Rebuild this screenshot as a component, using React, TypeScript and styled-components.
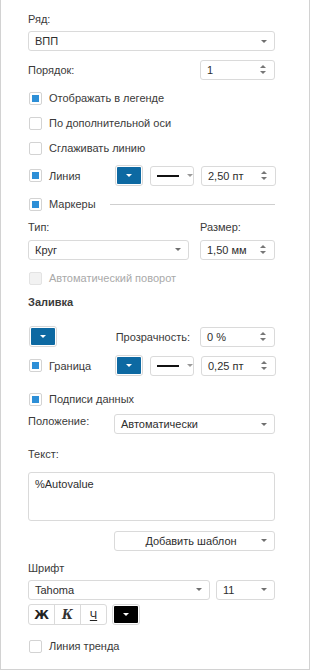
import styled, { createGlobalStyle } from "styled-components";

const Global = createGlobalStyle`
    body {
        margin: 0;
        background: #fff;
        font-family: "Liberation Sans", Arial, sans-serif;
        font-size: 11px;
        color: #3a3a3a;
    }
`;

const Panel = styled.div`
    width: 310px;
    height: 670px;
    box-sizing: border-box;
    border: 1px solid #d2d2d2;
    border-top: none;
    padding: 12px 34px 0 27px;
    display: flex;
    flex-direction: column;
`;

const Row = styled.div<{ $mt?: number; $h?: number; $top?: boolean }>`
    display: flex;
    align-items: ${({ $top }) => ($top ? "flex-start" : "center")};
    margin-top: ${({ $mt }) => $mt ?? 0}px;
    height: ${({ $h }) => $h ?? 14}px;
`;

const Text = styled.span<{ $muted?: boolean; $bold?: boolean; $w?: number }>`
    line-height: 14px;
    white-space: nowrap;
    color: ${({ $muted }) => ($muted ? "#a9a9a9" : "#3a3a3a")};
    font-weight: ${({ $bold }) => ($bold ? 700 : 400)};
    ${({ $w }) => ($w ? `width: ${$w}px; flex-shrink: 0;` : "")}
`;

const Spacer = styled.div`
    flex: 1;
`;

const Field = styled.div<{ $w?: number; $ml?: number }>`
    box-sizing: border-box;
    height: 20px;
    width: ${({ $w }) => ($w ? `${$w}px` : "auto")};
    ${({ $w }) => ($w ? "flex-shrink: 0;" : "flex: 1;")}
    margin-left: ${({ $ml }) => $ml ?? 0}px;
    border: 1px solid #dadada;
    border-radius: 3px;
    background: #fff;
    display: flex;
    align-items: center;
    padding: 0 7px 0 6px;
`;

const FieldText = styled.span<{ $center?: boolean }>`
    flex: 1;
    white-space: nowrap;
    color: #2e2e2e;
    text-align: ${({ $center }) => ($center ? "center" : "left")};
`;

const Caret = styled.span<{ $color?: string }>`
    width: 0;
    height: 0;
    border-left: 3px solid transparent;
    border-right: 3px solid transparent;
    border-top: 3px solid ${({ $color }) => $color ?? "#6f6f6f"};
    flex-shrink: 0;
`;

const SpinArrows = styled.span`
    display: flex;
    flex-direction: column;
    gap: 3px;
    flex-shrink: 0;
    margin-right: 1px;

    &::before,
    &::after {
        content: "";
        width: 0;
        height: 0;
        border-left: 3px solid transparent;
        border-right: 3px solid transparent;
    }
    &::before {
        border-bottom: 3px solid #777;
    }
    &::after {
        border-top: 3px solid #777;
    }
`;

const Box = styled.span<{ $checked?: boolean; $disabled?: boolean }>`
    box-sizing: border-box;
    width: 13px;
    height: 13px;
    border: 1px solid ${({ $disabled }) => ($disabled ? "#e3e3e3" : "#d3d3d3")};
    border-radius: 2px;
    background: ${({ $disabled }) => ($disabled ? "#f2f2f2" : "#fff")};
    margin: 0 7px 0 1px;
    flex-shrink: 0;
    display: flex;
    align-items: center;
    justify-content: center;

    &::after {
        content: "";
        width: 7px;
        height: 7px;
        background: #2d8fd7;
        display: ${({ $checked }) => ($checked ? "block" : "none")};
    }
`;

const ColorBtn = styled.div<{ $ml?: number }>`
    box-sizing: border-box;
    width: 28px;
    height: 21px;
    margin-left: ${({ $ml }) => $ml ?? 0}px;
    border: 1px solid #d8d8d8;
    border-radius: 3px;
    flex-shrink: 0;
    display: flex;
    align-items: center;
    justify-content: center;
    position: relative;
`;

const Swatch = styled.span<{ $color: string }>`
    position: absolute;
    inset: 1px;
    background: ${({ $color }) => $color};
    border-radius: 1px;
`;

const SwatchCaret = styled(Caret)`
    position: relative;
`;

const LineSample = styled.span`
    width: 22px;
    height: 2px;
    background: #111;
    margin-right: 8px;
    flex-shrink: 0;
`;

const Separator = styled.div`
    flex: 1;
    height: 1px;
    background: #cfcfcf;
    margin-left: 14px;
`;

const TextArea = styled.div`
    box-sizing: border-box;
    height: 49px;
    margin-top: 11px;
    border: 1px solid #dadada;
    border-radius: 3px;
    padding: 4px 6px;
    line-height: 14px;
    color: #2e2e2e;
`;

const StyleGroup = styled.div`
    display: flex;
    box-sizing: border-box;
    border: 1px solid #dadada;
    border-radius: 3px;
    height: 21px;
`;

const StyleBtn = styled.div<{ $last?: boolean }>`
    width: 25px;
    display: flex;
    align-items: center;
    justify-content: center;
    border-right: ${({ $last }) => ($last ? "none" : "1px solid #dadada")};
    color: #222;
`;

const Bold = styled.span`
    font-family: "DejaVu Sans", sans-serif;
    font-weight: 700;
    font-size: 12px;
`;

const Italic = styled.span`
    font-family: "DejaVu Serif", "Liberation Serif", serif;
    font-style: italic;
    font-weight: 700;
    font-size: 12px;
    color: #333;
`;

const Under = styled.span`
    text-decoration: underline;
    font-size: 11px;
`;

function Check({ label, checked, disabled }: { label: string; checked?: boolean; disabled?: boolean }) {
    return (
        <>
            <Box $checked={checked} $disabled={disabled} />
            <Text $muted={disabled}>{label}</Text>
        </>
    );
}

function Select({ value, w, ml, center }: { value: string; w?: number; ml?: number; center?: boolean }) {
    return (
        <Field $w={w} $ml={ml}>
            <FieldText $center={center}>{value}</FieldText>
            <Caret />
        </Field>
    );
}

function Spin({ value, ml }: { value: string; ml?: number }) {
    return (
        <Field $w={75} $ml={ml}>
            <FieldText>{value}</FieldText>
            <SpinArrows />
        </Field>
    );
}

function Color({ color, ml }: { color: string; ml?: number }) {
    return (
        <ColorBtn $ml={ml}>
            <Swatch $color={color} />
            <SwatchCaret $color="#fff" />
        </ColorBtn>
    );
}

function LineStyle() {
    return (
        <Field $w={44} $ml={7}>
            <LineSample />
            <Caret $color="#999" />
        </Field>
    );
}

export default function App() {
    return (
        <>
            <Global />
            <Panel>
                <Row>
                    <Text>Ряд:</Text>
                </Row>
                <Row $mt={5} $h={20}>
                    <Select value="ВПП" />
                </Row>
                <Row $mt={8} $h={21}>
                    <Text>Порядок:</Text>
                    <Spacer />
                    <Spin value="1" />
                </Row>
                <Row $mt={11}>
                    <Check label="Отображать в легенде" checked />
                </Row>
                <Row $mt={11}>
                    <Check label="По дополнительной оси" />
                </Row>
                <Row $mt={11}>
                    <Check label="Сглаживать линию" />
                </Row>
                <Row $mt={10} $h={21}>
                    <Box $checked />
                    <Text $w={66}>Линия</Text>
                    <Color color="#0d69a2" />
                    <LineStyle />
                    <Spin value="2,50 пт" ml={7} />
                </Row>
                <Row $mt={11}>
                    <Check label="Маркеры" checked />
                    <Separator />
                </Row>
                <Row $mt={9}>
                    <Text $w={172}>Тип:</Text>
                    <Text>Размер:</Text>
                </Row>
                <Row $mt={5} $h={21}>
                    <Select value="Круг" w={161} />
                    <Spacer />
                    <Spin value="1,50 мм" />
                </Row>
                <Row $mt={11}>
                    <Check label="Автоматический поворот" disabled />
                </Row>
                <Row $mt={10}>
                    <Text $bold>Заливка</Text>
                </Row>
                <Row $mt={17} $h={21}>
                    <Color color="#0d69a2" ml={1} />
                    <Spacer />
                    <Text>Прозрачность:</Text>
                    <Spin value="0 %" ml={10} />
                </Row>
                <Row $mt={8} $h={21}>
                    <Box $checked />
                    <Text $w={66}>Граница</Text>
                    <Color color="#0d69a2" />
                    <LineStyle />
                    <Spin value="0,25 пт" ml={7} />
                </Row>
                <Row $mt={16}>
                    <Check label="Подписи данных" checked />
                </Row>
                <Row $mt={8} $h={21} $top>
                    <Text $w={86}>Положение:</Text>
                    <Select value="Автоматически" />
                </Row>
                <Row $mt={12}>
                    <Text>Текст:</Text>
                </Row>
                <TextArea>%Autovalue</TextArea>
                <Row $mt={9} $h={21}>
                    <Spacer />
                    <Select value="Добавить шаблон" w={161} center />
                </Row>
                <Row $mt={10}>
                    <Text>Шрифт</Text>
                </Row>
                <Row $mt={4} $h={21}>
                    <Select value="Tahoma" />
                    <Select value="11" w={59} ml={6} />
                </Row>
                <Row $mt={4} $h={21}>
                    <StyleGroup>
                        <StyleBtn>
                            <Bold>Ж</Bold>
                        </StyleBtn>
                        <StyleBtn>
                            <Italic>К</Italic>
                        </StyleBtn>
                        <StyleBtn $last>
                            <Under>Ч</Under>
                        </StyleBtn>
                    </StyleGroup>
                    <Color color="#000" ml={5} />
                </Row>
                <Row $mt={14}>
                    <Check label="Линия тренда" />
                </Row>
            </Panel>
        </>
    );
}
